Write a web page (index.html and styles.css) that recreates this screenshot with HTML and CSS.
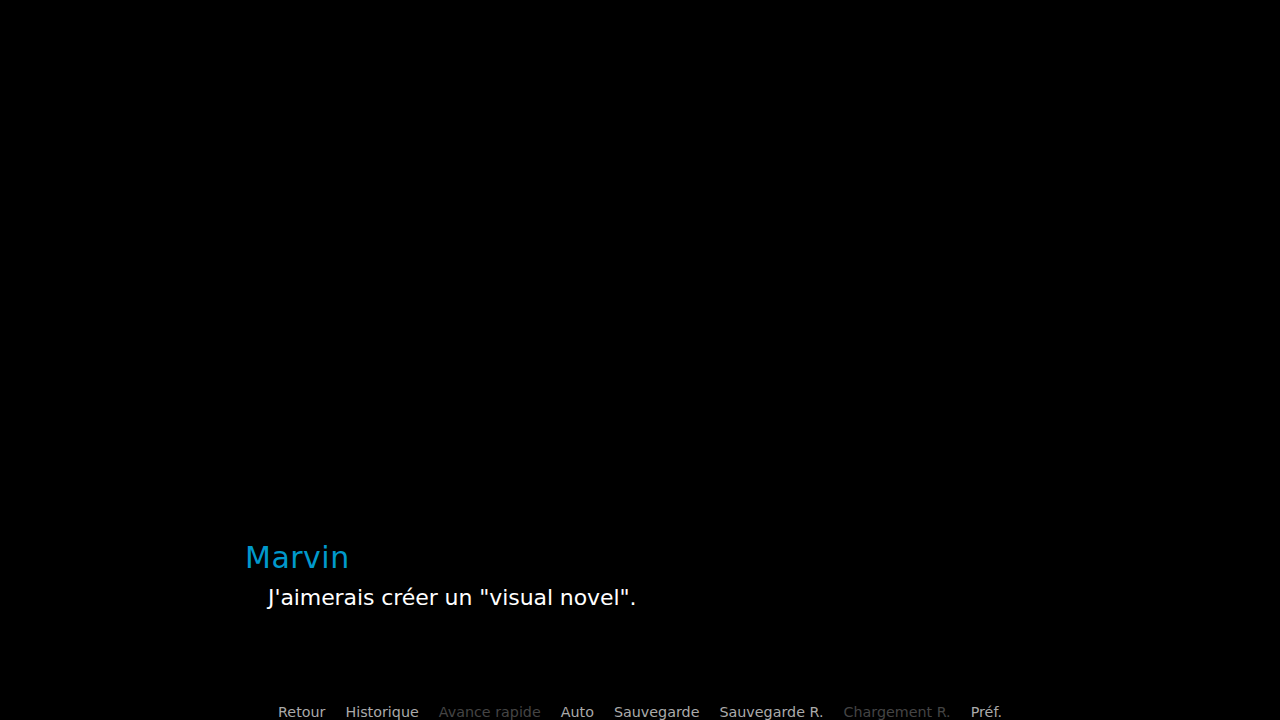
FILE: index.html
```html
<!DOCTYPE html>
<html lang="fr">
<head>
<meta charset="utf-8">
<title>Visual novel</title>
<link rel="stylesheet" href="styles.css">
</head>
<body>
<main class="screen">
  <section class="textbox">
    <div class="namebox">Marvin</div>
    <p class="dialogue">J'aimerais créer un "visual novel".</p>
    <nav class="quick-menu">
      <span class="qbtn">Retour</span>
      <span class="qbtn">Historique</span>
      <span class="qbtn off">Avance rapide</span>
      <span class="qbtn">Auto</span>
      <span class="qbtn">Sauvegarde</span>
      <span class="qbtn">Sauvegarde R.</span>
      <span class="qbtn off">Chargement R.</span>
      <span class="qbtn">Préf.</span>
    </nav>
  </section>
</main>
</body>
</html>
```

FILE: styles.css
```css
html, body {
  margin: 0;
  padding: 0;
  background: #000;
}
body {
  font-family: "DejaVu Sans", sans-serif;
}
.screen {
  width: 1280px;
  height: 720px;
  display: flex;
  flex-direction: column;
  justify-content: flex-end;
  overflow: hidden;
}
.textbox {
  height: 185px;
  display: flex;
  flex-direction: column;
  box-sizing: border-box;
  padding-top: 5px;
}
.namebox {
  padding-left: 245px;
  font-size: 30px;
  letter-spacing: 0.5px;
  color: #0099cc;
  line-height: normal;
}
.dialogue {
  margin: 10px 0 0 0;
  padding-left: 268px;
  font-size: 22px;
  letter-spacing: -0.08px;
  color: #ffffff;
  line-height: normal;
}
.quick-menu {
  margin-top: auto;
  display: flex;
  justify-content: center;
  gap: 20px;
  font-size: 14.3px;
  line-height: normal;
}
.qbtn {
  color: #aaaaaa;
}
.qbtn.off {
  color: #444444;
}
```
